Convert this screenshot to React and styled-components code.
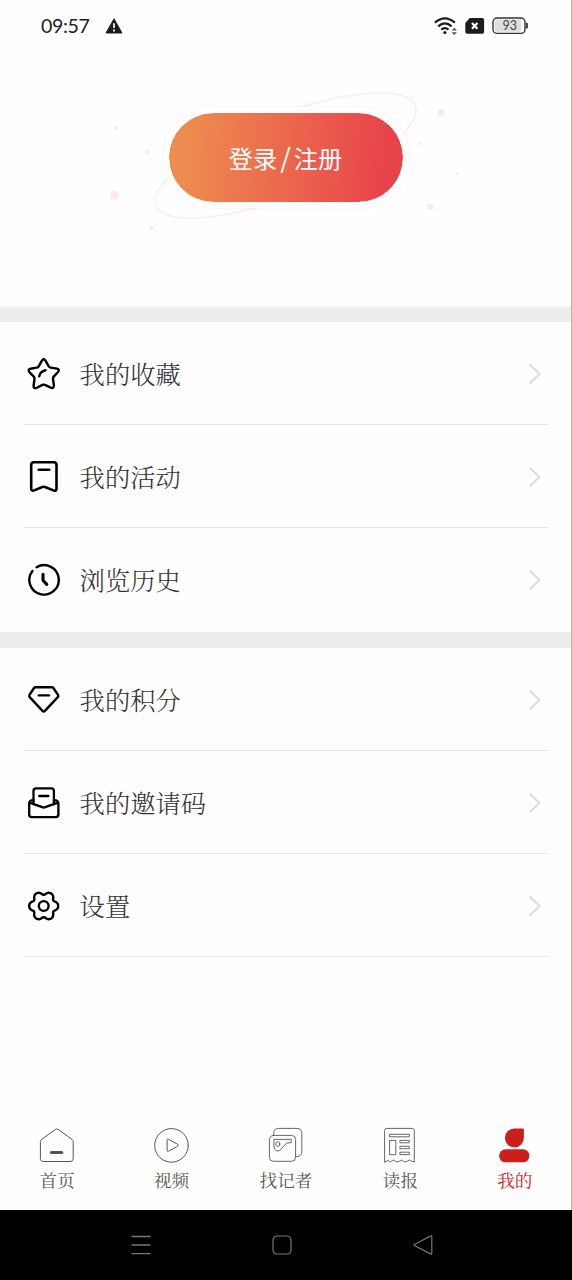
import React from "react";
import styled, { createGlobalStyle } from "styled-components";

// Global Styles
const GlobalStyle = createGlobalStyle`
  * {
    box-sizing: border-box;
  }
  body {
    margin: 0;
    background-color: #fefefe;
  }
  svg {
    display: block;
    flex-shrink: 0;
  }
`;

const serif = `"Noto Serif CJK SC", "Noto Serif SC", "Source Han Serif SC", "Noto Sans CJK SC", serif`;
const sans = `"Noto Sans CJK SC", sans-serif`;

// Styled components
const Phone = styled.div`
  width: 572px;
  height: 1280px;
  display: flex;
  flex-direction: column;
  overflow: hidden;
`;

const Screen = styled.div`
  flex: 1;
  display: flex;
  flex-direction: column;
  background-color: #fefefe;
  border-right: 1px solid #b4b4b4;
`;

const StatusBar = styled.div`
  height: 52px;
  display: flex;
  align-items: center;
  justify-content: space-between;
  padding: 0 42px 0 41px;
`;

const StatusGroup = styled.div`
  display: flex;
  align-items: center;
  gap: ${(props) => props.$gap}px;
`;

const Time = styled.span`
  width: 49px;
  padding-bottom: 1px;
  font-family: Lato, sans-serif;
  font-size: 19.6px;
  line-height: 24px;
  letter-spacing: -0.4px;
  color: #222;
  white-space: nowrap;
`;

const LoginArea = styled.div`
  height: 255px;
  display: grid;
  justify-items: center;

  > * {
    grid-area: 1 / 1;
  }
`;

const LoginButton = styled.button`
  width: 246px;
  height: 101px;
  margin-top: 55px;
  padding: 0 0 3px;
  border: 6px solid #fff;
  border-radius: 51px;
  background: linear-gradient(95deg, #ee8c50 8%, #e8434a 92%) padding-box;
  box-shadow: 0 0 3px rgba(240, 200, 200, 0.4);
  font-family: ${sans};
  font-size: 24.2px;
  color: #fff;
`;

const Slash = styled.span`
  margin: 0 3px;
  font-size: 27px;
`;

const Menu = styled.div`
  border-top: ${(props) => props.$band}px solid #ededed;
  padding-bottom: ${(props) => (props.$last ? 0 : 1)}px;
`;

const MenuRow = styled.div`
  height: 103px;
  margin: 0 23px 0 24px;
  padding: 2px 6px 0 2px;
  display: flex;
  align-items: center;
  border-bottom: 1px solid ${(props) => (props.$line ? "#e6e6e6" : "transparent")};
`;

const MenuLabel = styled.span`
  flex: 1;
  margin-left: 17.6px;
  padding-bottom: 2px;
  font-family: ${serif};
  font-size: 25.3px;
  font-weight: 300;
  line-height: 36px;
  color: #333;
`;

const TabBar = styled.div`
  margin-top: auto;
  margin-right: -1px;
  height: 83px;
  display: flex;
`;

const Tab = styled.div`
  flex: 1;
  display: flex;
  flex-direction: column;
  align-items: center;
  color: ${(props) => (props.$active ? "#cb1f1c" : "#555")};
`;

const TabLabel = styled.span`
  margin-top: 4px;
  font-family: ${serif};
  font-size: 17.6px;
  line-height: 26px;
`;

const SystemNav = styled.div`
  height: 70px;
  display: flex;
  align-items: center;
  justify-content: center;
  gap: 121px;
  padding-right: 9px;
  background-color: #000;
`;

const Line = ({ size = 36, width = 2.4, children }) => (
  <svg
    width={size}
    height={size}
    viewBox={`0 0 ${size} ${size}`}
    fill="none"
    stroke="currentColor"
    strokeWidth={width}
    strokeLinecap="round"
    strokeLinejoin="round"
  >
    {children}
  </svg>
);

// Six rounded teeth, traced in polar coordinates
const gearPoints = Array.from({ length: 120 }, (_, i) => {
  const t = (i / 120) * Math.PI * 2;
  const r = 13.1 + 1.7 * Math.cos(6 * t) - 0.3 * Math.cos(12 * t);
  return `${(17.7 + r * Math.cos(t)).toFixed(2)},${(18 + r * Math.sin(t)).toFixed(2)}`;
}).join(" ");

const StarIcon = () => (
  <Line>
    <path d="M15.9 4.6Q17.7 2 19.5 4.6L22.6 10.2Q23.3 11.4 24.6 11.6L31 12.6Q34 13.4 32 16L27.7 20.6Q26.8 21.6 27 23L27.9 29.3Q27.9 32.9 24.6 31.6L19 28.9Q17.7 28.3 16.4 28.9L10.8 31.8Q7.4 33 7.6 29.5L8.5 23Q8.7 21.6 7.8 20.6L3.4 16.1Q1.6 13.4 4.5 12.7L10.8 11.6Q12.2 11.4 12.8 10.2Z" />
    <path d="M13.2 20.4Q14 15.2 19.5 14.2" />
  </Line>
);

const BookmarkIcon = () => (
  <Line width={2.6}>
    <path d="M8 3.3H27.8Q30.5 3.3 30.5 6V29.5Q30.5 32.8 27.4 31.4L19 28Q17.7 27.4 16.4 28L8.2 31.4Q5.2 32.6 5.2 29.5V6Q5.2 3.3 8 3.3Z" />
    <path d="M12.8 10.7H23.2" />
  </Line>
);

const ClockIcon = () => (
  <Line>
    <path d="M10.6 5.2A14.7 14.7 0 1 1 6.4 8.9" />
    <path d="M17 12.2V17.4Q17 18.4 17.7 19.1L20.8 22.4" strokeWidth="3.1" />
  </Line>
);

const DiamondIcon = () => (
  <Line>
    <path d="M9.6 5.2H25.8Q26.8 5.2 27.4 6L32 12.8Q32.8 14 31.8 15.1L18.9 28.9Q17.7 30.1 16.5 28.9L3.7 15.1Q2.7 14 3.5 12.8L8 6Q8.6 5.2 9.6 5.2Z" />
    <path d="M12.8 13.4H23" />
  </Line>
);

const InviteIcon = () => (
  <Line width={2.3}>
    <path d="M7.5 19.2V6Q7.5 3.4 10.1 3.4H25.3Q27.9 3.4 27.9 6V19.2" />
    <path d="M7.5 15.1Q3.2 15 3.2 18.2V29.6Q3.2 32.2 5.8 32.2H29.8Q32.4 32.2 32.4 29.6V18.2Q32.4 15 27.9 15.1" />
    <path d="M3.6 17.6L16.2 22.2Q17.7 22.8 19.2 22.2L32 17.6" />
    <path d="M13.2 11H22.4" />
  </Line>
);

const GearIcon = () => (
  <Line>
    <polygon points={gearPoints} />
    <circle cx="17.7" cy="18" r="4.9" />
  </Line>
);

const Chevron = () => (
  <svg width="14" height="22" viewBox="0 0 14 22" fill="none" stroke="#dcdcdc" strokeWidth="2">
    <path d="M1.5 1.5L11.5 11L1.5 20.5" />
  </svg>
);

const HomeTab = () => (
  <Line width={1}>
    <path d="M16.6 2.3Q17.8 1.5 19 2.3L33 12.4Q34.2 13.2 34.2 14.6V31.5Q34.2 34.5 31.2 34.5H4.4Q1.4 34.5 1.4 31.5V14.6Q1.4 13.2 2.6 12.4Z" />
    <path d="M12.4 25.4H22.8" strokeWidth="3" />
  </Line>
);

const VideoTab = () => (
  <Line width={1}>
    <circle cx="17.5" cy="18.4" r="16.8" />
    <path d="M13.1 13.3Q13.1 11.6 14.7 12.4L23.8 17.4Q25 18.3 23.8 19.1L14.7 24.2Q13.1 25 13.1 23.3Z" />
  </Line>
);

const ReporterTab = () => (
  <Line width={0.9}>
    <path d="M5.7 8.3V6.3Q5.7 1.4 10.7 1.4H28.8Q33.8 1.4 33.8 6.4V24.6Q33.8 29.5 28.8 29.5H27.6" />
    <rect x="1.4" y="8.4" width="26.2" height="25.9" rx="4" />
    <path d="M6.4 12.4H23.2V15.6Q18.5 15.2 16.4 18.3L12.6 22.8Q10.8 24.6 8.3 23.6Q6.2 22.6 5.9 19.3V13Q5.9 12.4 6.4 12.4Z" />
    <ellipse cx="9.8" cy="17.1" rx="2" ry="2.4" />
  </Line>
);

const PaperTab = () => (
  <Line width={0.9}>
    <path d="M2.6 35V3.6Q2.6 1.4 4.8 1.4H30.1Q32.3 1.4 32.3 3.6V35L29.4 34.2Q27.4 31.7 25.4 34.2L23.4 35L21.4 34.2Q19.4 31.7 17.4 34.2L15.4 35L13.4 34.2Q11.4 31.7 9.4 34.2L7.8 35L6.2 33.6Z" />
    <rect x="7.8" y="7.3" width="19.5" height="2.5" />
    <rect x="8" y="13.4" width="5.8" height="14.3" />
    <rect x="18.3" y="13.4" width="9" height="2.4" />
    <rect x="18.3" y="19.3" width="9" height="2.4" />
    <rect x="18.3" y="25.2" width="9" height="2.4" />
  </Line>
);

const MineTab = () => (
  <svg width="36" height="36" viewBox="0 0 36 36" fill="currentColor">
    <path d="M17.3 1.4H25.9Q26.9 1.4 26.9 2.4V10.6A9.5 9.5 0 1 1 17.3 1.4Z" />
    <rect x="2.1" y="22.3" width="30.4" height="13" rx="6.5" />
  </svg>
);

const WarningIcon = () => (
  <svg width="18" height="16" viewBox="0 0 18 16">
    <path d="M9 .8L17 15H1Z" fill="#1c1c1c" stroke="#1c1c1c" strokeLinejoin="round" />
    <path d="M9 5.2V10M9 11.6V13.4" stroke="#fff" strokeWidth="1.7" />
  </svg>
);

const WifiIcon = () => (
  <svg width="24" height="19" viewBox="0 0 24 19" fill="none" stroke="#1c1c1c" strokeWidth="2.2">
    <path d="M.9 5.7Q10.9-3 20.9 5.7M4.2 9.4Q10.9 3.2 17.6 9.4M7.3 12.7Q10.9 9.6 14.5 12.7" />
    <circle cx="10.9" cy="15.6" r="1.6" fill="#1c1c1c" stroke="none" />
    <path d="M17.6 13.4L20.3 10.7L23 13.4ZM17.6 15.2L20.3 17.9L23 15.2Z" fill="#555" stroke="none" />
  </svg>
);

const SimIcon = () => (
  <svg width="20" height="17" viewBox="0 0 20 17">
    <path d="M4.7.1H17.1Q19.1.1 19.1 2.1V13.8Q19.1 15.8 17.1 15.8H2.3Q.3 15.8.3 13.8V4.9Z" fill="#1c1c1c" />
    <path d="M7 4.9L12.4 10.7M12.4 4.9L7 10.7" stroke="#fff" strokeWidth="2.2" />
  </svg>
);

const BatteryIcon = () => (
  <svg width="37" height="18" viewBox="0 0 37 18">
    <rect x="1" y="1" width="32" height="15.4" rx="4" fill="#fff" stroke="#333" strokeWidth="1.4" />
    <path d="M5 2.6H29V14.8H5Q2.7 14.8 2.7 12.5V4.9Q2.7 2.6 5 2.6Z" fill="#dedede" />
    <path d="M34 5.8H34.8Q35.8 5.8 35.8 6.8V10.6Q35.8 11.6 34.8 11.6H34Z" fill="#333" />
    <text x="17.8" y="13.2" textAnchor="middle" fontFamily="Lato, sans-serif" fontSize="12.5" fill="#444">
      93
    </text>
  </svg>
);

// Orbit ring and floating dots behind the login button
const Orbit = () => (
  <svg width="571" height="255" viewBox="0 0 571 255">
    <ellipse
      cx="285.5"
      cy="103.5"
      rx="139"
      ry="40.5"
      transform="rotate(-21 285.5 103.5)"
      fill="none"
      stroke="#f8eeef"
      strokeWidth="1.5"
    />
    <g fill="#fae8ea">
      <circle cx="114.5" cy="143.3" r="4.5" />
      <circle cx="440.8" cy="60.2" r="3.2" />
      <circle cx="430.2" cy="154.6" r="3.2" />
      <circle cx="116" cy="76" r="1.9" />
      <circle cx="147" cy="100" r="1.9" />
      <circle cx="151.3" cy="176" r="2.1" />
      <circle cx="421" cy="91.5" r="1.5" />
      <circle cx="457" cy="121.5" r="1.4" />
    </g>
  </svg>
);

const menus = [
  {
    band: 15,
    items: [
      { label: "我的收藏", Icon: StarIcon },
      { label: "我的活动", Icon: BookmarkIcon },
      { label: "浏览历史", Icon: ClockIcon, noLine: true },
    ],
  },
  {
    band: 16,
    items: [
      { label: "我的积分", Icon: DiamondIcon },
      { label: "我的邀请码", Icon: InviteIcon },
      { label: "设置", Icon: GearIcon },
    ],
  },
];

const tabs = [
  { label: "首页", Icon: HomeTab },
  { label: "视频", Icon: VideoTab },
  { label: "找记者", Icon: ReporterTab },
  { label: "读报", Icon: PaperTab },
  { label: "我的", Icon: MineTab, active: true },
];

const App = () => {
  return (
    <>
      <GlobalStyle />
      <Phone>
        <Screen>
          <StatusBar>
            <StatusGroup $gap={15}>
              <Time>09:57</Time>
              <WarningIcon />
            </StatusGroup>
            <StatusGroup $gap={7}>
              <WifiIcon />
              <SimIcon />
              <BatteryIcon />
            </StatusGroup>
          </StatusBar>

          <LoginArea>
            <Orbit />
            <LoginButton>
              登录<Slash>/</Slash>注册
            </LoginButton>
          </LoginArea>

          {menus.map((menu, i) => (
            <Menu key={i} $band={menu.band} $last={i === menus.length - 1}>
              {menu.items.map(({ label, Icon, noLine }) => (
                <MenuRow key={label} $line={!noLine}>
                  <Icon />
                  <MenuLabel>{label}</MenuLabel>
                  <Chevron />
                </MenuRow>
              ))}
            </Menu>
          ))}

          <TabBar>
            {tabs.map(({ label, Icon, active }) => (
              <Tab key={label} $active={active}>
                <Icon />
                <TabLabel>{label}</TabLabel>
              </Tab>
            ))}
          </TabBar>
        </Screen>

        <SystemNav>
          <svg width="20" height="20" viewBox="0 0 20 20" stroke="#777" strokeWidth="1.3">
            <path d="M.5 1.5H19.5M.5 10H19.5M.5 18.7H19.5" />
          </svg>
          <svg width="20" height="20" viewBox="0 0 20 20" fill="none" stroke="#777" strokeWidth="1.2">
            <rect x="1" y="1" width="18" height="18" rx="4" />
          </svg>
          <svg width="20" height="20" viewBox="0 0 20 20" fill="none" stroke="#777" strokeWidth="1.2">
            <path d="M1.8 9.2L17.4 1.1Q18.8.6 18.8 2V18Q18.8 19.4 17.4 18.9L1.8 10.8Q.6 10 1.8 9.2Z" />
          </svg>
        </SystemNav>
      </Phone>
    </>
  );
};

export default App;
